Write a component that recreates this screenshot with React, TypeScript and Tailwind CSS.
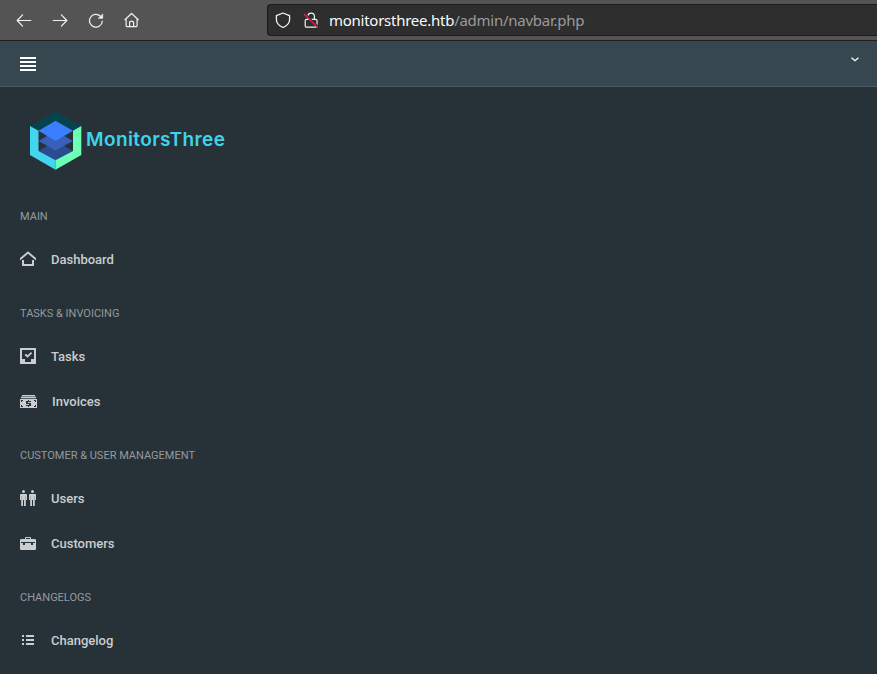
import type { ReactNode } from "react";

function BrowserIcon({ children }: { children: ReactNode }) {
  return (
    <svg
      width="16"
      height="16"
      viewBox="0 0 16 16"
      fill="none"
      stroke="#f1f1f1"
      strokeWidth="1.2"
      strokeLinecap="round"
      strokeLinejoin="round"
      className="shrink-0"
    >
      {children}
    </svg>
  );
}

function BrowserBar() {
  return (
    <div className="flex h-[41px] items-start border-b border-[#202020] bg-[#545454] pl-4 pt-1">
      <div className="flex h-8 w-[251px] items-center gap-5">
        <BrowserIcon>
          <path d="M14.8 8.5H1.5M6.6 2.9L1.2 8.5l5.4 5.6" />
        </BrowserIcon>
        <BrowserIcon>
          <path d="M1.2 8.5h13.3M9.4 2.9l5.4 5.6-5.4 5.6" />
        </BrowserIcon>
        <BrowserIcon>
          <path d="M14.3 9.2A6.4 6.4 0 1 1 12.4 4.2" />
          <path d="M14.7 2.3v4h-4z" fill="#f1f1f1" strokeWidth=".7" />
        </BrowserIcon>
        <BrowserIcon>
          <path d="M.9 7.7L7.6 1.5l6.7 6.2M2.1 6.8v6.6c0 .8.5 1.3 1.3 1.3h8.4c.8 0 1.3-.5 1.3-1.3V6.8M5.6 14.5v-4.1c0-.6.4-1 1-1h2c.6 0 1 .4 1 1v4.1" />
        </BrowserIcon>
      </div>
      <div className="flex h-8 flex-1 items-center rounded-l border border-r-0 border-[#1b1b1b] bg-[#2e2e2e] pl-[7px]">
        <BrowserIcon>
          <path
            d="M8 1L14.6 3.7v3.8c0 3.3-2.7 6.3-6.6 8-3.9-1.7-6.6-4.7-6.6-8V3.7z"
            strokeWidth="1.3"
          />
        </BrowserIcon>
        <div className="ml-3 flex">
          <BrowserIcon>
            <path d="M4.8 7.3V4.4a3.3 3.3 0 0 1 6.6 0v2.9M3.6 7.3h9c.8 0 1.4.6 1.4 1.4v5.1c0 .8-.6 1.4-1.4 1.4h-9c-.8 0-1.4-.6-1.4-1.4V8.7c0-.8.6-1.4 1.4-1.4z" />
            <path d="M1.9 1.8l13.3 12.8" stroke="#2e2e2e" strokeWidth="1.6" />
            <path d="M1.3 2.4l13.3 12.8" stroke="#e8174b" strokeWidth="1.5" />
          </BrowserIcon>
        </div>
        <span className="ml-2.5 font-['Noto_Sans',sans-serif] text-[15px] leading-5 tracking-[-0.26px] text-[#9b9b9b]">
          <span className="text-[#fbfbfe]">monitorsthree.htb</span>/admin/navbar.php
        </span>
      </div>
    </div>
  );
}

function Logo() {
  return (
    <div className="flex h-[98px] items-start pl-[29px] pt-6">
      <svg width="54" height="60" viewBox="29 111 54 60">
        <path d="M55.5 111.5L81.3 126 73 131 55.5 121 38.5 131 30 126z" fill="#07434e" />
        <path d="M38.5 131v20l17 9.5 17.5-9.5v-20l-17.500-10z" fill="#263238" />
        <path d="M55.5 141l17.5 10-17.5 10-17-10z" fill="#2a4c90" />
        <path d="M55.5 131l17.5 10-17.5 9.5-17-9.5z" fill="#3860ba" />
        <path d="M55.5 120.8l17.5 10-17.5 10.2-17-10.2z" fill="#397fff" />
        <path d="M30 126l8.5 4.8V151l17 9.3v9.5L30 155z" fill="#43d5ed" />
        <path d="M81.3 126L73 130.8V151l-17.5 9.3v9.5L81.3 155z" fill="#6dffb3" />
      </svg>
      <span className="ml-[3px] mt-[17px] font-['Inter',sans-serif] text-[19px] font-semibold leading-6 tracking-[0.4px] text-[#3fd3ec]">
        MonitorsThree
      </span>
    </div>
  );
}

function MenuIcon({ children, wide }: { children: ReactNode; wide?: boolean }) {
  return (
    <svg
      height="16"
      viewBox={wide ? "0 0 17 16" : "0 0 16 16"}
      fill="currentColor"
      className={wide ? "w-[17px] shrink-0" : "w-4 shrink-0"}
    >
      {children}
    </svg>
  );
}

const homeIcon = (
  <MenuIcon>
    <path d="M0 7.1L8 .3l8 6.8v2.3L8 2.8 0 9.4z" />
    <path d="M2 9h2v4h8V9h2v6H2z" />
  </MenuIcon>
);

const taskIcon = (
  <MenuIcon>
    <path fillRule="evenodd" d="M0 0h16v16H0zM2 2v9h3v3h6v-3h3V2z" />
    <path d="M4.5 7L6 5.700l1.500 1.500L11 4l1.200 1.300-4.700 4.400z" />
  </MenuIcon>
);

const cashIcon = (
  <MenuIcon wide>
    <path d="M2 2h13v1.300H2zM1 3.700h15v1.600H1z" />
    <path
      fillRule="evenodd"
      d="M0 6h17v9H0zM1 7v2h1V8h1V7zM14 7v1h1v1h1V7zM1 12v2h2v-1H2v-1zM15 12v1h-1v1h2v-2zM8 7v1H6v3h3v1H6v1h2v1h1v-1h2v-3H8V9h3V8H9V7z"
    />
  </MenuIcon>
);

const usersIcon = (
  <MenuIcon>
    <circle cx="3.5" cy="1.5" r="1.5" />
    <path d="M1 4h5a1 1 0 0 1 1 1v5H6V6h-.2v10H4v-6H3v6H1.200V6H1v4H0V5a1 1 0 0 1 1-1z" />
    <circle cx="12.5" cy="1.5" r="1.5" />
    <path d="M10 4h5a1 1 0 0 1 1 1v5h-1V6h-.2v10H13v-6h-1v6h-1.800V6H10v4H9V5a1 1 0 0 1 1-1z" />
  </MenuIcon>
);

const briefcaseIcon = (
  <MenuIcon>
    <path
      fillRule="evenodd"
      d="M5 4V3a1 1 0 0 1 1-1h4a1 1 0 0 1 1 1v1h4a1 1 0 0 1 1 1v9a1 1 0 0 1-1 1H1a1 1 0 0 1-1-1V5a1 1 0 0 1 1-1zM6 4h4V3H6zM1 7v1h2v2h2V8h6v2h2V8h2V7z"
    />
  </MenuIcon>
);

const listIcon = (
  <MenuIcon>
    <path d="M2 3h2v2H2zM6 3h8v2H6zM2 7h2v2H2zM6 7h8v2H6zM2 11h2v2H2zM6 11h8v2H6z" />
  </MenuIcon>
);

const sections = [
  { title: "MAIN", items: [{ label: "Dashboard", icon: homeIcon }] },
  {
    title: "TASKS & INVOICING",
    items: [
      { label: "Tasks", icon: taskIcon },
      { label: "Invoices", icon: cashIcon },
    ],
  },
  {
    title: "CUSTOMER & USER MANAGEMENT",
    items: [
      { label: "Users", icon: usersIcon },
      { label: "Customers", icon: briefcaseIcon },
    ],
  },
  { title: "CHANGELOGS", items: [{ label: "Changelog", icon: listIcon }] },
];

export default function App() {
  return (
    <div className="h-screen overflow-hidden bg-[#263238] font-['Roboto',sans-serif]">
      <BrowserBar />
      <header className="flex h-[46px] items-start justify-between border-b border-[#4b5a62] bg-[#37474f] pl-5 pr-[18px]">
        <svg width="16" height="14" viewBox="0 0 16 14" fill="#fff" className="mt-4">
          <path d="M0 0h16v2H0zM0 4h16v2H0zM0 8h16v2H0zM0 12h16v2H0z" />
        </svg>
        <svg
          width="8"
          height="5"
          viewBox="0 0 8 5"
          fill="none"
          stroke="#fff"
          strokeWidth="1.3"
          className="mt-4"
        >
          <path d="M.5.7L4 3.7 7.5.7" />
        </svg>
      </header>
      <Logo />
      <nav>
        {sections.map((section) => (
          <section key={section.title}>
            <h2 className="h-[52px] pl-5 pt-[22px] text-[11px] leading-[20px] text-[#949a9d]">
              {section.title}
            </h2>
            {section.items.map((item) => (
              <a
                key={item.label}
                className="flex h-[45px] items-center pb-px pl-5 text-[13px] font-medium leading-5 text-[#cbcdce]"
              >
                {item.icon}
                <span className="ml-[15px] pt-0.5">{item.label}</span>
              </a>
            ))}
          </section>
        ))}
      </nav>
    </div>
  );
}
